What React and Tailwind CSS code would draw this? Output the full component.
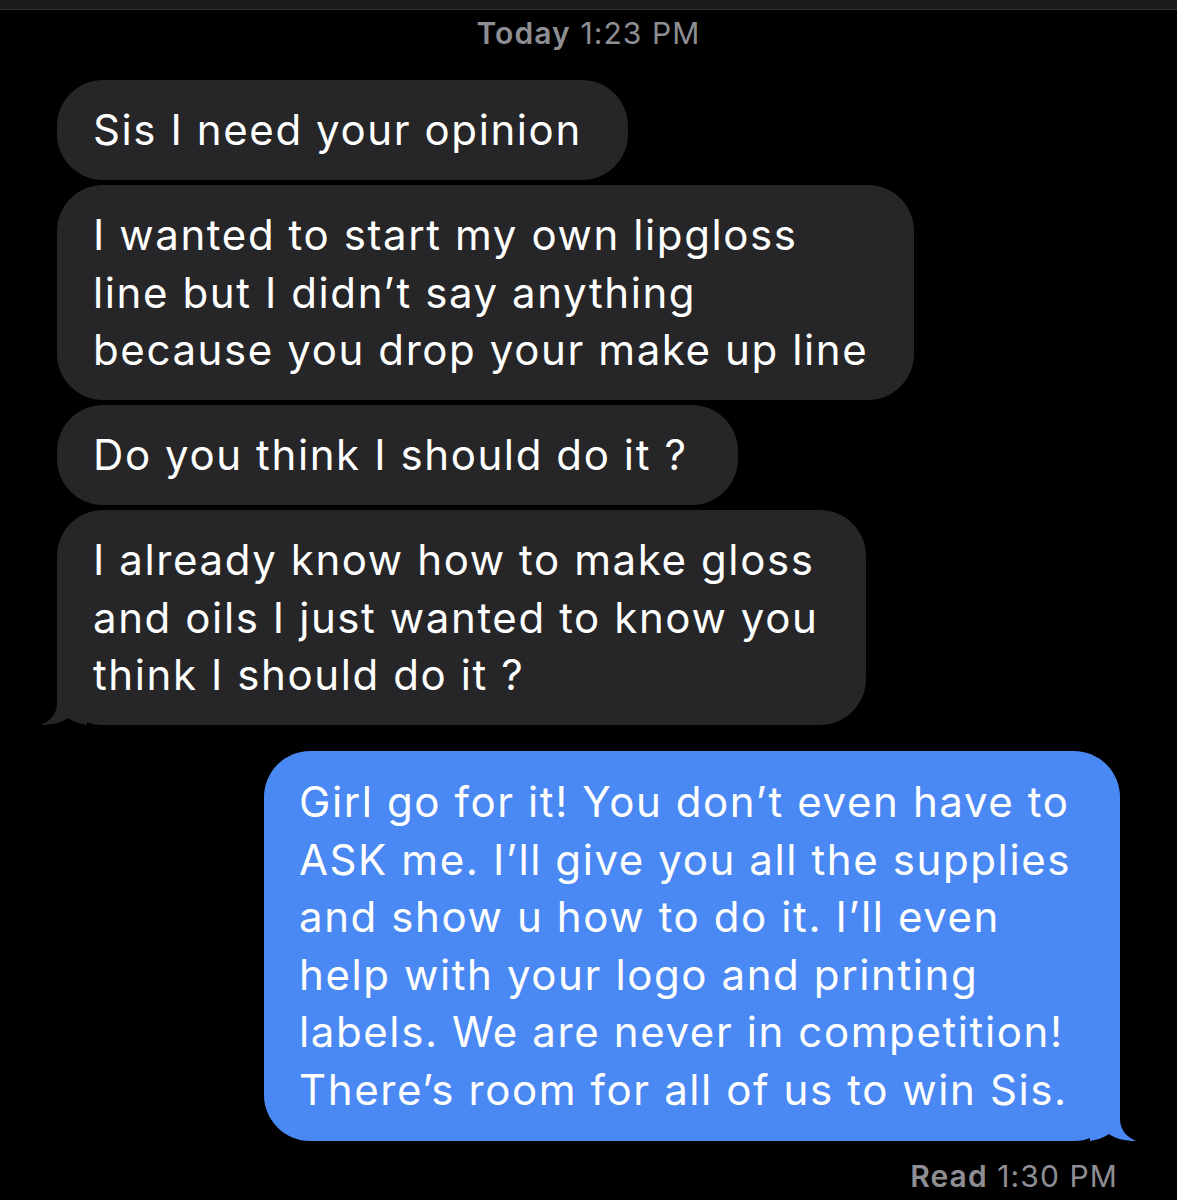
import React from 'react';

const font = { fontFamily: 'Inter, "Noto Sans", sans-serif' };

function GrayBubble({ width, lines, tail }) {
  return (
    <div className={`relative ${width}`}>
      <div className="rounded-[46px] bg-[#262628] pl-[36px] pr-[20px] py-[21.25px] text-[42px] leading-[57.5px] text-white tracking-[1.6px]">
        {lines.map((l, i) => (
          <div key={i} className="whitespace-nowrap">{l}</div>
        ))}
      </div>
      {tail && (
        <svg className="absolute left-[-16px] bottom-0" width="46" height="44" viewBox="0 0 46 44">
          <path d="M16 0 L16 22 C16 33 9 40 0 44 C10 44 20 42 27 37 C33 41 40 43 46 44 L46 0 Z" fill="#262628" />
        </svg>
      )}
    </div>
  );
}

export default function App() {
  return (
    <div className="w-[1177px] h-[1200px] bg-black overflow-hidden flex flex-col" style={font}>
      <div className="h-[10px] bg-[#1c1c1e] border-b border-[#333335]" />

      <div className="mt-[6px] text-center text-[30px] leading-[34px] text-[#8e8e93] tracking-[1.1px]">
        <span className="font-semibold">Today</span> 1:23 PM
      </div>

      <div className="mt-[30px] pl-[57px] flex flex-col gap-[5px]">
        <GrayBubble width="w-[571px]" lines={['Sis I need your opinion']} />
        <GrayBubble
          width="w-[857px]"
          lines={['I wanted to start my own lipgloss', 'line but I didn’t say anything', 'because you drop your make up line']}
        />
        <GrayBubble width="w-[681px]" lines={['Do you think I should do it ?']} />
        <GrayBubble
          width="w-[809px]"
          tail
          lines={['I already know how to make gloss', 'and oils I just wanted to know you', 'think I should do it ?']}
        />
      </div>

      <div className="mt-[26px] ml-[264px] relative w-[856px]">
        <div className="rounded-[46px] bg-[#4a89f3] pl-[35px] pr-[20px] py-[22px] text-[42px] leading-[57.6px] text-white tracking-[1.6px]">
          {[
            'Girl go for it! You don’t even have to',
            'ASK me. I’ll give you all the supplies',
            'and show u how to do it. I’ll even',
            'help with your logo and printing',
            'labels. We are never in competition!',
            'There’s room for all of us to win Sis.',
          ].map((l, i) => (
            <div key={i} className="whitespace-nowrap">{l}</div>
          ))}
        </div>
        <svg className="absolute right-[-16px] bottom-0" width="46" height="44" viewBox="0 0 46 44">
          <path d="M30 0 L30 22 C30 33 37 40 46 44 C36 44 26 42 19 37 C13 41 6 43 0 44 L0 0 Z" fill="#4a89f3" />
        </svg>
      </div>

      <div className="mt-[18px] pr-[59px] text-right text-[30px] leading-[34px] text-[#8e8e93] tracking-[1.1px]">
        <span className="font-semibold">Read</span> 1:30 PM
      </div>
    </div>
  );
}
